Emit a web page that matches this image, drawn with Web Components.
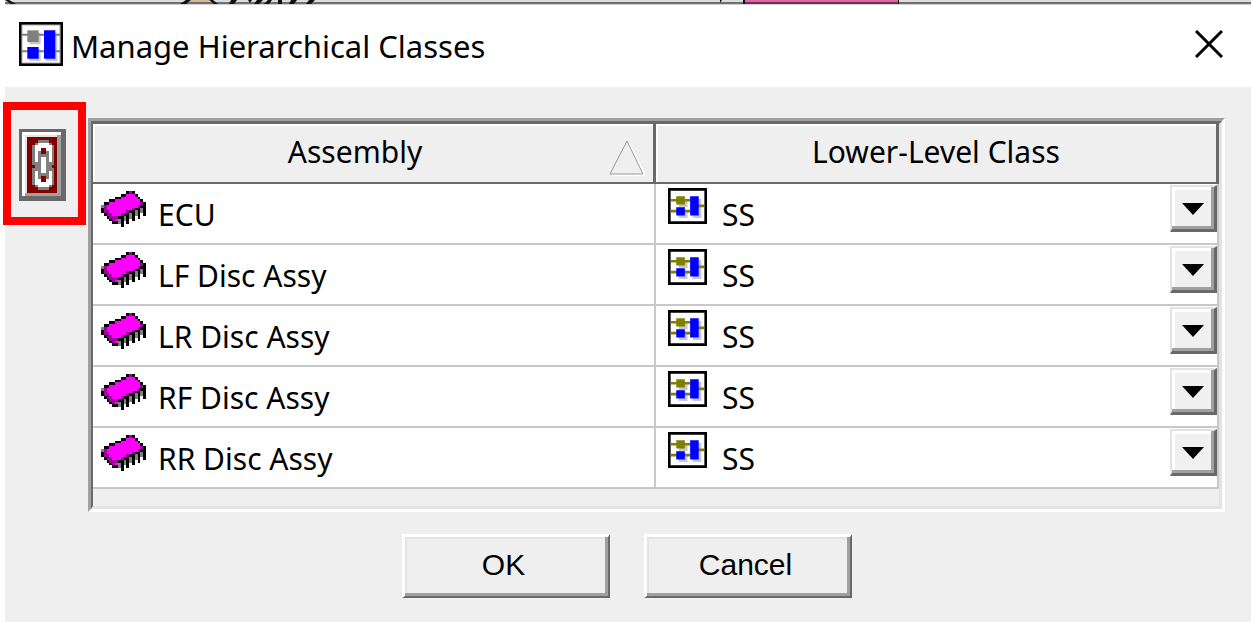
<!DOCTYPE html>
<html lang="en">
<head>
<meta charset="utf-8">
<meta name="viewport" content="width=device-width, initial-scale=1">
<title>Manage Hierarchical Classes</title>
<style>
  html, body { height:100%; margin:0; }
  body {
    display:flex;
    flex-direction:column;
    padding-left:5px;
    box-sizing:border-box;
    overflow:hidden;
    background:#fff;
    color:#000;
    font-family:"Noto Sans", "Open Sans", sans-serif;
    font-size:30px;
    line-height:40px;
  }
  class-dialog { flex:1; }
</style>
</head>
<body>
<window-edge></window-edge>
<class-dialog>
  <span slot="title">Manage Hierarchical Classes</span>
  <link-button slot="tools"></link-button>
  <class-table></class-table>
  <bevel-button slot="actions">OK</bevel-button>
  <bevel-button slot="actions">Cancel</bevel-button>
</class-dialog>

<script>
// Builds an SVG from rows of characters, one character per pixel.
function pixelArt(rows, palette) {
  const rects = [];
  rows.forEach((row, y) => {
    for (let x = 0; x < row.length;) {
      let end = x + 1;
      while (row[end] === row[x]) end++;
      const fill = palette[row[x]];
      if (fill) rects.push(`<rect x="${x}" y="${y}" width="${end - x}" height="1" fill="${fill}"/>`);
      x = end;
    }
  });
  return `<svg viewBox="0 0 ${rows[0].length} ${rows.length}" preserveAspectRatio="none" shape-rendering="crispEdges" aria-hidden="true">${rects.join("")}</svg>`;
}

const CHIP = [
  ".........KPK....",
  ".......KKMMMK...",
  ".....KKMMMMMMK..",
  "...KKMMMMMMMMMK.",
  ".KKMMMMMMMMMMMPK",
  "GPMMMMMMMMMMMPKK",
  "KPMMMMMMMMMPKKGK",
  "KPPMMMMMMPKKGKGK",
  ".KPPMMMPKKGKGK.K",
  "..KPPPKKGKGK.K..",
  "...KPMGKGK.K....",
  "....KKGK.K......",
  ".......K........",
];

const CHAIN = [
  "...........",
  "....GGGG...",
  "...GWWWWG..",
  "..GWWWWWWG.",
  "..GWWRRWWG.",
  "..GWGRRGWG.",
  "..GWGGGGWG.",
  "..GWGWWGWG.",
  "..GWGWWGWG.",
  "..GGGWWGGG.",
  "...GGWWGG..",
  "..GGGWWGGG.",
  "..GWGWWGWG.",
  "..GWGGGGWG.",
  "..GWGRRGWG.",
  "..GWWRRWWG.",
  "..GWWWWWWG.",
  "...GWWWWG..",
  "....GGGG...",
  "...........",
];

class WindowEdge extends HTMLElement {
  constructor() {
    super();
    this.attachShadow({ mode: "open" }).innerHTML = `
      <style>
        :host { display:block; height:5px; }
        svg { display:block; width:100%; height:5px; }
      </style>
      <svg aria-hidden="true">
        <rect width="100%" height="2" fill="#d9dddb"/>
        <path d="M180 0h24v2h-24z" fill="#d8b890"/>
        <rect y="2" width="100%" height="2" fill="#707070"/>
        <rect y="4" width="100%" height="1" fill="#d0d0d0"/>
        <path d="M0 0h4l7 4H6zM181 0h5l-5 4h-6zM204 0h4l5 4h-4zM226 0h6l-3 4h-5zM243 0h4l-2 3zM252 0h6l-4 4h-5zM263 0h4l-3 4h-5zM273 0h4v4h-4zM286 0h6l-3 4h-5zM304 0h6l-4 4h-5zM715 0h2l-2 3z" fill="#111"/>
        <path d="M738 0h155v2H738z" fill="#e064a4"/>
        <path d="M738 2h155v2H738z" fill="#70304f"/>
        <path d="M738 0h2v4h-2zM893 0h1v4h-1z" fill="#111"/>
      </svg>
    `;
  }
}

class ChipIcon extends HTMLElement {
  constructor() {
    super();
    this.attachShadow({ mode: "open" }).innerHTML = `
      <style>
        :host { display:block; flex:none; }
        svg { display:block; width:45px; height:36px; }
      </style>
      ${pixelArt(CHIP, { K: "#000", M: "#f0f", P: "#a000a0", G: "#808080" })}
    `;
  }
}

class BlockIcon extends HTMLElement {
  constructor() {
    super();
    this.attachShadow({ mode: "open" }).innerHTML = `
      <style>
        :host { display:block; flex:none; }
        svg { display:block; width:39px; height:36px; }
      </style>
      <svg viewBox="0 0 118 109" preserveAspectRatio="none" aria-hidden="true">
        <path d="M4 4h110v101H4z" fill="#fff" stroke="#000" stroke-width="8"/>
        <path d="M33 33h26v25H33zM33 66h26v25H33zM75 33h26v58H75z" fill="#c8c8c8"/>
        <path d="M8 37h60M8 70h60M90 54h20" stroke="#808000" stroke-width="8"/>
        <path d="M25 25h26v25H25z" fill="#808000"/>
        <path d="M25 58h26v25H25zM67 25h26v58H67z" fill="#00f"/>
      </svg>
    `;
  }
}

class LinkButton extends HTMLElement {
  constructor() {
    super();
    this.attachShadow({ mode: "open" }).innerHTML = `
      <style>
        :host {
          display:block;
          padding:19px 12px 16px 8px;
          border:8px solid #f00;
        }
        button {
          display:block;
          padding:3px 0 0 3px;
          border:solid #696969;
          border-width:3px 5px 5px 3px;
          background:#fff;
          cursor:pointer;
        }
        .face {
          display:block;
          padding:2px 0 0 2px;
          border:solid #a0a0a0;
          border-width:0 4px 3px 0;
          background:#e3e3e3;
        }
        svg { display:block; width:30px; height:56px; background:#800000; }
      </style>
      <button type="button" title="Link class" aria-label="Link class">
        <span class="face">${pixelArt(CHAIN, { G: "#808080", W: "#fff", R: "#800000" })}</span>
      </button>
    `;
  }
}

class BevelButton extends HTMLElement {
  constructor() {
    super();
    this.attachShadow({ mode: "open" }).innerHTML = `
      <style>
        :host { display:block; }
        button {
          display:block;
          width:208px;
          height:64px;
          padding:0 6px 4px 0;
          border:solid;
          border-width:3px 2px 2px 3px;
          border-color:#fff #696969 #696969 #fff;
          background:#efefef;
          box-shadow:inset -3px -3px #a0a0a0, inset 2px 2px #e3e3e3;
          color:inherit;
          font:30px/40px "Liberation Sans", Arial, sans-serif;
          cursor:pointer;
        }
        button:active { border-color:#696969 #fff #fff #696969; }
      </style>
      <button type="button"><slot></slot></button>
    `;
  }
}

class ClassPicker extends HTMLElement {
  constructor() {
    super();
    const label = this.getAttribute("label");
    this.attachShadow({ mode: "open" }).innerHTML = `
      <style>
        :host { display:grid; flex:1; align-items:center; }
        select, .arrow { grid-area:1 / 1; }
        select {
          width:100%;
          height:59px;
          padding:3px 50px 0 0;
          border:0;
          appearance:none;
          background:transparent;
          color:inherit;
          font:inherit;
          cursor:pointer;
        }
        .arrow {
          display:grid;
          place-items:center;
          justify-self:end;
          align-self:start;
          box-sizing:border-box;
          width:47px;
          height:47px;
          margin-top:1px;
          padding-top:2px;
          border:solid;
          border-width:2px 3px 3px 2px;
          border-color:#e3e3e3 #696969 #696969 #e3e3e3;
          background:#f0f0f0;
          box-shadow:inset -3px -3px #a0a0a0, inset 3px 3px #fff;
          pointer-events:none;
        }
        svg { width:22px; height:12px; }
      </style>
      <select aria-label="${label}"><option>SS</option></select>
      <span class="arrow"><svg viewBox="0 0 22 12" aria-hidden="true"><path d="M0 0h22L11 12z"/></svg></span>
    `;
  }
}

class ClassTable extends HTMLElement {
  constructor() {
    super();
    this.attachShadow({ mode: "open" });
    this.assemblies = ["ECU", "LF Disc Assy", "LR Disc Assy", "RF Disc Assy", "RR Disc Assy"];
    this.render();
  }

  render() {
    this.shadowRoot.innerHTML = `
      <style>
        :host {
          display:block;
          border:3px solid;
          border-color:#a0a0a0 #fff #fff #a0a0a0;
        }
        .well {
          padding-bottom:17px;
          border:solid;
          border-width:3px 3px 3px 2px;
          border-color:#696969 #e3e3e3 #e3e3e3 #696969;
        }
        table { width:100%; border-collapse:separate; border-spacing:0; table-layout:fixed; }
        th {
          height:60px;
          padding:0 0 3px;
          border:solid #696969;
          border-width:0 3px 2px 0;
          box-sizing:border-box;
          background:#efefef;
          box-shadow:inset 2px 2px #fff;
          font-weight:400;
        }
        .head { display:flex; align-items:center; justify-content:center; height:55px; }
        .head span { flex:1; padding-left:8px; }
        .head svg { flex:none; width:36px; height:36px; margin:13px 8px 0 0; }
        td {
          height:61px;
          padding:0;
          border:solid #c8c8c8;
          border-width:0 2px 2px 0;
          box-sizing:border-box;
          background:#fff;
        }
        .cell { display:flex; align-items:center; height:59px; }
        chip-icon { margin:0 12px 10px 8px; }
        block-icon { margin:0 15px 15px 12px; }
        .name { padding-top:3px; }
      </style>
      <div class="well">
        <table>
          <thead>
            <tr>
              <th scope="col" aria-sort="ascending">
                <div class="head">
                  <span>Assembly</span>
                  <svg viewBox="0 0 36 36" fill="none" aria-hidden="true">
                    <path d="M20 4L36 35H3" stroke="#fff" stroke-width="2"/>
                    <path d="M18 1L34 34H1z" stroke="#999"/>
                  </svg>
                </div>
              </th>
              <th scope="col">Lower-Level Class</th>
            </tr>
          </thead>
          <tbody>
            ${this.assemblies.map((name) => `
              <tr>
                <td><div class="cell"><chip-icon></chip-icon><span class="name">${name}</span></div></td>
                <td><div class="cell"><block-icon></block-icon><class-picker label="Class for ${name}"></class-picker></div></td>
              </tr>
            `).join("")}
          </tbody>
        </table>
      </div>
    `;
  }
}

class ClassDialog extends HTMLElement {
  constructor() {
    super();
    this.attachShadow({ mode: "open" }).innerHTML = `
      <style>
        :host { display:flex; flex-direction:column; background:#efefef; }
        header {
          display:flex;
          align-items:center;
          height:82px;
          padding:0 28px 4px 14px;
          box-sizing:border-box;
          background:#fff;
        }
        header > svg { flex:none; width:44px; height:44px; margin-right:8px; }
        h1 { flex:1; margin:0; padding-top:4px; font-size:31px; font-weight:400; }
        .close { padding:0; border:0; background:none; cursor:pointer; }
        .close svg { display:block; width:28px; height:28px; }
        main { display:flex; align-items:flex-start; padding:15px 26px 0 0; }
        .tools { margin-left:-2px; }
        .content { flex:1; min-width:0; padding:16px 0 0 2px; }
        footer { display:flex; justify-content:center; gap:34px; padding:22px 2px 0 0; }
      </style>
      <header>
        <svg viewBox="0 0 132 132" aria-hidden="true">
          <path d="M4 4h124v124H4z" fill="#fff" stroke="#000" stroke-width="8"/>
          <path d="M10 10h112v112H10z" fill="none" stroke="#ccc" stroke-width="3"/>
          <path d="M31 32h34v35H31zM31 82h34v35H31zM81 32h34v85H81z" fill="#c8c8c8"/>
          <path d="M8 38h116M8 88h116" stroke="#808080" stroke-width="6"/>
          <path d="M25 25h34v35H25z" fill="#808080"/>
          <path d="M25 75h34v35H25zM75 25h34v85H75z" fill="#00f"/>
        </svg>
        <h1><slot name="title"></slot></h1>
        <button class="close" type="button" aria-label="Close">
          <svg viewBox="0 0 28 28" aria-hidden="true"><path d="M1 1L27 27M27 1L1 27" stroke="#000" stroke-width="3"/></svg>
        </button>
      </header>
      <main>
        <div class="tools"><slot name="tools"></slot></div>
        <div class="content"><slot></slot></div>
      </main>
      <footer><slot name="actions"></slot></footer>
    `;
  }
}

customElements.define("window-edge", WindowEdge);
customElements.define("chip-icon", ChipIcon);
customElements.define("block-icon", BlockIcon);
customElements.define("link-button", LinkButton);
customElements.define("bevel-button", BevelButton);
customElements.define("class-picker", ClassPicker);
customElements.define("class-table", ClassTable);
customElements.define("class-dialog", ClassDialog);
</script>
</body>
</html>
